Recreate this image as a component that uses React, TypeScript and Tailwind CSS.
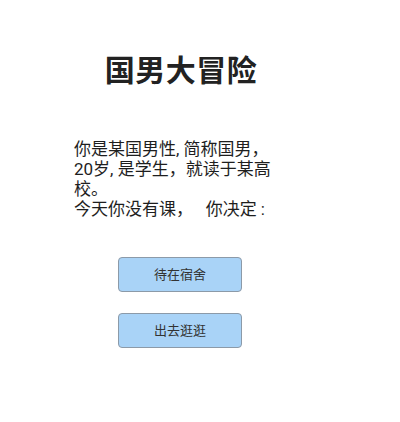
export default function App() {
  const font = { fontFamily: '"Roboto", "Noto Sans CJK SC", sans-serif' };
  return (
    <div className="w-[400px] h-[422px] bg-white text-[#222]" style={font}>
      <div className="w-[362px] flex flex-col items-center pt-[53px]">
        <h1 className="text-[30px] leading-[36px] font-bold tracking-[0.5px] text-[#222]">国男大冒险</h1>
      </div>
      <div className="pl-[74px] pt-[50px] text-[17px] leading-[20px] text-[#1e1e1e]">
        <p className="whitespace-nowrap">你是某国男性, 简称国男，</p>
        <p className="whitespace-nowrap">20岁, 是学生，就读于某高</p>
        <p className="whitespace-nowrap">校。</p>
        <p className="whitespace-pre">今天你没有课，   你决定 :</p>
      </div>
      <div className="w-[360px] flex flex-col items-center gap-[21px] pt-[38px]">
        <button className="w-[124px] h-[35px] rounded-[4px] border border-[#8c9aa8] bg-[#a9d3f7] text-[13px] text-[#333]">
          待在宿舍
        </button>
        <button className="w-[124px] h-[35px] rounded-[4px] border border-[#8c9aa8] bg-[#a9d3f7] text-[13px] text-[#333]">
          出去逛逛
        </button>
      </div>
    </div>
  );
}
